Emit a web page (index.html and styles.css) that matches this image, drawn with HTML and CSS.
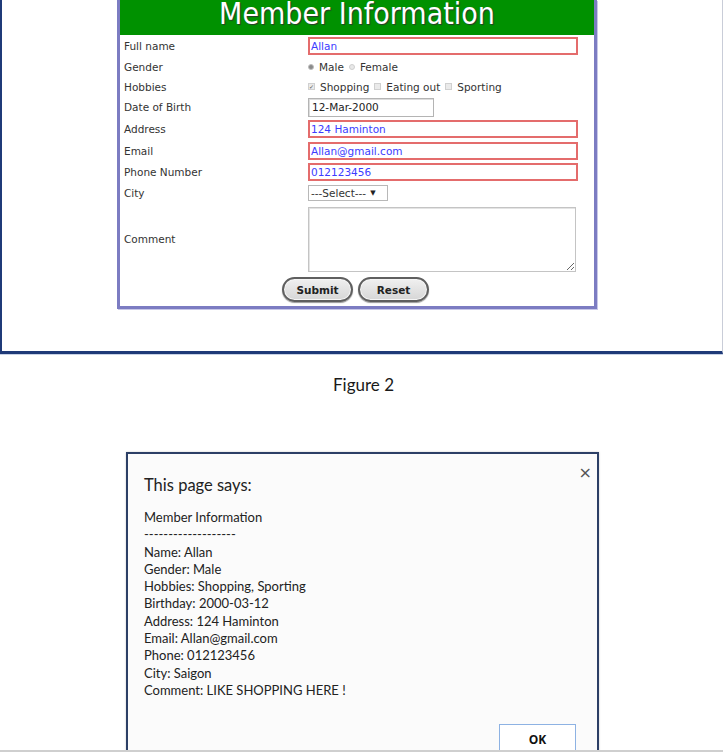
FILE: index.html
```html
<!DOCTYPE html>
<html>
<head>
<meta charset="utf-8">
<link rel="stylesheet" href="styles.css">
</head>
<body>
<div class="page">
  <div class="frame">
    <div class="form">
      <div class="form-head">Member Information</div>
      <div class="grid">
        <div class="label">Full name</div>
        <div class="field"><input class="txt bad" type="text" value="Allan"></div>

        <div class="label">Gender</div>
        <div class="field opts">
          <span class="radio on"></span><span class="opt">Male</span>
          <span class="radio"></span><span class="opt">Female</span>
        </div>

        <div class="label">Hobbies</div>
        <div class="field opts">
          <span class="check on">&#10003;</span><span class="opt">Shopping</span>
          <span class="check"></span><span class="opt">Eating out</span>
          <span class="check"></span><span class="opt">Sporting</span>
        </div>

        <div class="label">Date of Birth</div>
        <div class="field"><input class="date" type="text" value="12-Mar-2000"></div>

        <div class="label">Address</div>
        <div class="field"><input class="txt bad" type="text" value="124 Haminton"></div>

        <div class="label">Email</div>
        <div class="field"><input class="txt bad" type="text" value="Allan@gmail.com"></div>

        <div class="label">Phone Number</div>
        <div class="field"><input class="txt bad" type="text" value="012123456"></div>

        <div class="label">City</div>
        <div class="field"><span class="select">---Select--- <span class="arrow">&#9660;</span></span></div>

        <div class="label">Comment</div>
        <div class="field"><textarea class="area"></textarea></div>

        <div class="buttons">
          <button class="btn">Submit</button>
          <button class="btn">Reset</button>
        </div>
      </div>
    </div>
  </div>

  <div class="caption">Figure 2</div>

  <div class="dialog">
    <span class="close">&#215;</span>
    <div class="d-title">This page says:</div>
    <div class="d-msg">
      <div>Member Information</div>
      <div>-------------------</div>
      <div>Name: Allan</div>
      <div>Gender: Male</div>
      <div>Hobbies: Shopping, Sporting</div>
      <div>Birthday: 2000-03-12</div>
      <div>Address: 124 Haminton</div>
      <div>Email: Allan@gmail.com</div>
      <div>Phone: 012123456</div>
      <div>City: Saigon</div>
      <div>Comment: LIKE SHOPPING HERE !</div>
    </div>
    <div class="d-actions"><button class="ok">OK</button></div>
  </div>
</div>
</body>
</html>
```

FILE: styles.css
```css
* { box-sizing: border-box; }
html, body { margin: 0; padding: 0; background: #ffffff; }

.page {
  width: 723px;
  height: 752px;
  overflow: hidden;
  border-bottom: 2px solid #cfcfcf;
}

.frame {
  width: 723px;
  height: 354px;
  border-left: 2px solid #1f3a78;
  border-right: 1px solid #c9cdd8;
  border-bottom: 3px solid #1f3a78;
  box-shadow: 0 1px 0 #c9d3e6;
}

.form {
  width: 480px;
  margin-left: 115px;
  border: 3px solid #7c7cc2;
  border-top: none;
  box-shadow: 1px 1px 0 #c8c8e8;
  background: #ffffff;
}

.form-head {
  height: 35px;
  padding-top: 1px;
  background: #009100;
  color: #ffffff;
  font-family: "DejaVu Sans Condensed", "DejaVu Sans", sans-serif;
  font-size: 30px;
  line-height: 26px;
  text-align: center;
  text-shadow: 1px 1px 1px #2a3a2a;
}

.grid {
  display: grid;
  grid-template-columns: 188px 1fr;
  grid-template-rows: 21px 21px 19px 22px 22px 22px 20px 22px 69px 33px;
  align-items: center;
  font-family: "DejaVu Sans", sans-serif;
  font-size: 10.5px;
  color: #333333;
}

.label { padding-left: 4px; }

.field { display: flex; align-items: center; }

.txt {
  width: 270px;
  height: 18px;
  border: 2px solid #e46c6c;
  padding: 0 1px;
  font-family: "DejaVu Sans", sans-serif;
  font-size: 10.5px;
  color: #3c3cff;
  outline: none;
  background: #fff;
}

.date {
  width: 126px;
  height: 19px;
  border: 1px solid #b4b4b4;
  box-shadow: inset 1px 1px 0 #dcdcdc;
  padding: 0 3px;
  font-family: "DejaVu Sans", sans-serif;
  font-size: 10.5px;
  color: #222;
  background: #fff;
}

.opts { gap: 3px; }
.opt { margin-right: 2px; }

.radio {
  width: 6px;
  height: 6px;
  border-radius: 50%;
  border: 1px solid #cfcfcf;
  background: #e8e8e8;
  margin-right: 2px;
}
.radio.on { background: #8a8a8a; border-color: #bdbdbd; }

.check {
  width: 7px;
  height: 7px;
  border: 1px solid #d0d0d0;
  background: #eaeaea;
  margin-right: 2px;
  font-size: 6px;
  line-height: 5px;
  color: #555;
  text-align: center;
  overflow: hidden;
}

.select {
  display: inline-flex;
  align-items: center;
  width: 80px;
  height: 16px;
  border: 1px solid #b8b8b8;
  padding-left: 2px;
  font-size: 10.5px;
  color: #333;
  background: #fff;
}
.arrow { font-size: 7px; margin-left: 4px; color: #222; }

.area {
  width: 268px;
  height: 65px;
  margin-top: 2px;
  border: 1px solid #c4c4c4;
  box-shadow: inset 1px 1px 0 #e4e4e4;
  resize: both;
  background: #fff;
}

.buttons {
  grid-column: 1 / span 2;
  display: flex;
  justify-content: center;
  gap: 5px;
  padding-right: 3px;
}

.btn {
  width: 71px;
  height: 25px;
  border: 2px solid #5f5f5f;
  border-radius: 13px;
  background: linear-gradient(#f0f0f0, #d6d6d6);
  box-shadow: inset 0 0 0 1px #f5f5f5, 0 1px 1px #999;
  font-family: "DejaVu Sans", sans-serif;
  font-weight: bold;
  font-size: 10.5px;
  color: #222;
  padding: 0;
}

.caption {
  margin-top: 21px;
  text-align: center;
  font-family: Lato, "Liberation Sans", sans-serif;
  font-size: 17px;
  line-height: 20px;
  color: #1a1a1a;
  padding-left: 4px;
}

.dialog {
  position: relative;
  width: 473px;
  margin-top: 57px;
  margin-left: 126px;
  border: 2px solid #2c3f66;
  background: #fbfbfb;
  box-shadow: 0 0 2px #cccccc;
  padding: 20px 21px 0 16px;
  font-family: Lato, "Open Sans", sans-serif;
  color: #222;
}

.close {
  position: absolute;
  top: 9px;
  right: 5px;
  font-family: "DejaVu Sans", sans-serif;
  font-size: 16px;
  color: #555;
}

.d-title {
  font-size: 16.5px;
  line-height: 22px;
  color: #222;
}

.d-msg {
  margin-top: 13px;
  font-size: 13px;
  line-height: 17.3px;
}

.d-actions {
  display: flex;
  justify-content: flex-end;
  margin-top: 25px;
}

.ok {
  width: 77px;
  height: 30px;
  border: 1px solid #8db2e3;
  background: #ffffff;
  font-family: "Open Sans", sans-serif;
  font-weight: bold;
  font-size: 12px;
  color: #111;
}
```
